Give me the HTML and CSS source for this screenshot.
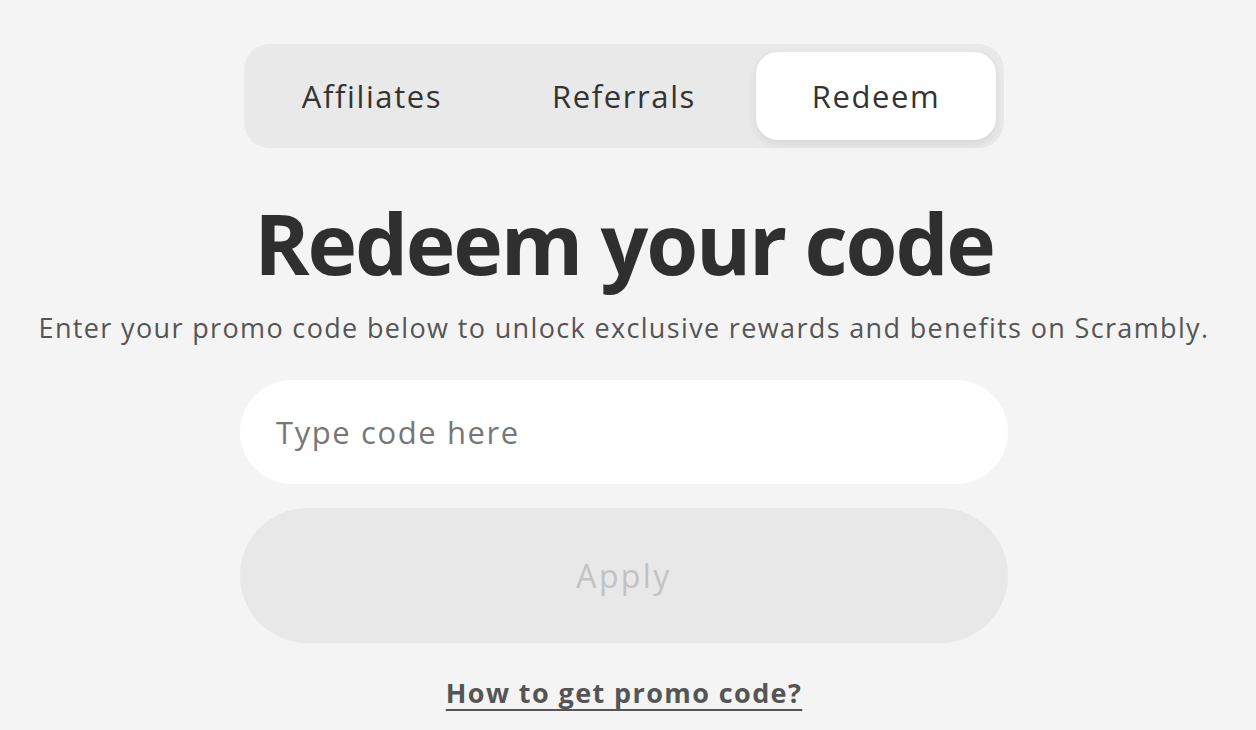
FILE: index.html
```html
<!DOCTYPE html>
<html lang="en">
<head>
<meta charset="utf-8">
<title>Redeem</title>
<link rel="stylesheet" href="styles.css">
</head>
<body>
<main class="page">
  <nav class="tabs">
    <button class="tab">Affiliates</button>
    <button class="tab">Referrals</button>
    <button class="tab tab-active">Redeem</button>
  </nav>
  <h1 class="title">Redeem your code</h1>
  <p class="subtitle">Enter your promo code below to unlock exclusive rewards and benefits on Scrambly.</p>
  <input class="code-input" type="text" placeholder="Type code here">
  <button class="apply" disabled>Apply</button>
  <a class="help-link" href="#">How to get promo code?</a>
</main>
</body>
</html>
```

FILE: styles.css
```css
* { box-sizing: border-box; }
html, body {
  margin: 0;
  padding: 0;
  background: #f4f4f4;
  font-family: "Open Sans", "Noto Sans", sans-serif;
  color: #333;
}
.page {
  width: 1248px;
  height: 730px;
  overflow: hidden;
  display: flex;
  flex-direction: column;
  align-items: center;
  padding-top: 44px;
}
.tabs {
  width: 760px;
  height: 104px;
  background: #e9e9e9;
  border-radius: 26px;
  padding: 8px;
  display: flex;
  gap: 12px;
}
.tab {
  flex: 1;
  border: none;
  background: transparent;
  border-radius: 22px;
  font-family: inherit;
  font-size: 31px;
  font-weight: 500;
  letter-spacing: 1.6px;
  color: #333;
  padding: 0;
  cursor: pointer;
}
.tab-active {
  background: #fff;
  box-shadow: 0 4px 10px rgba(0,0,0,0.08);
}
.title {
  margin: 45px 0 0;
  font-size: 84px;
  font-weight: 700;
  line-height: 100px;
  letter-spacing: -2.2px;
  color: #2f2f2f;
}
.subtitle {
  margin: 17px 0 0;
  font-size: 27px;
  line-height: 36px;
  letter-spacing: 1.35px;
  color: #555;
}
.code-input {
  margin-top: 34px;
  width: 768px;
  height: 104px;
  border: none;
  border-radius: 52px;
  background: #fff;
  padding: 0 36px;
  font-family: inherit;
  font-size: 31px;
  letter-spacing: 1.6px;
  color: #333;
  outline: none;
}
.code-input::placeholder { color: #777; }
.apply {
  margin-top: 24px;
  width: 768px;
  height: 135px;
  flex-shrink: 0;
  border: none;
  border-radius: 68px;
  background: #e8e8e8;
  font-family: inherit;
  font-size: 32px;
  font-weight: 500;
  letter-spacing: 2.4px;
  color: #c2c2c2;
}
.help-link {
  margin-top: 31px;
  font-size: 27px;
  font-weight: 700;
  letter-spacing: 1.4px;
  color: #555;
  text-decoration: underline;
  text-underline-offset: 6px;
  text-decoration-thickness: 2px;
}
```
